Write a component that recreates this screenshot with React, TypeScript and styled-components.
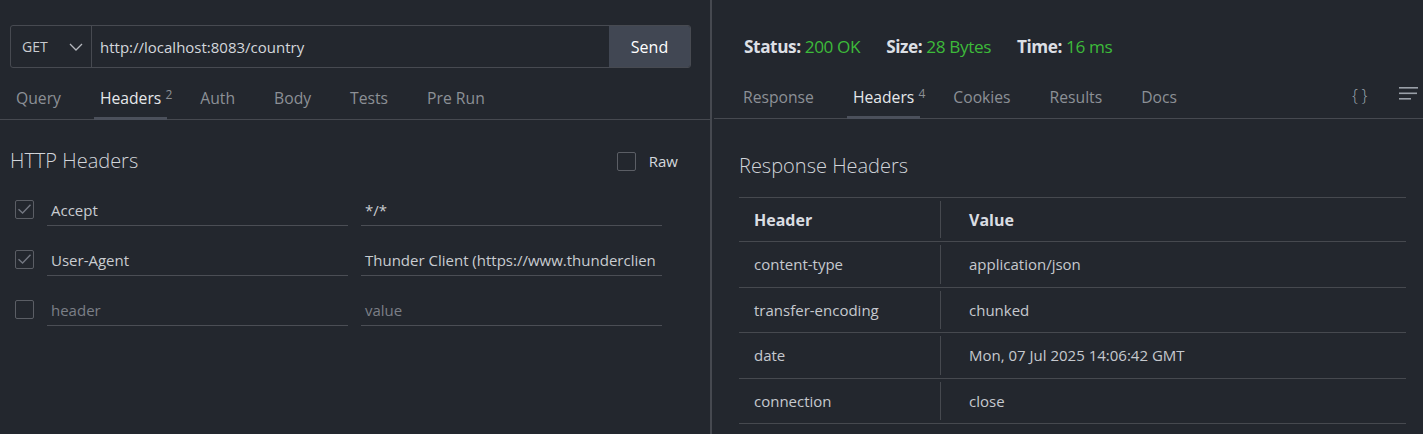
import React from "react";
import styled, { createGlobalStyle } from "styled-components";

const Global = createGlobalStyle`
  html, body { margin: 0; padding: 0; background: #23272e; }
  body { font-family: "Open Sans", "Noto Sans", sans-serif; color: #cccccc; }
  * { box-sizing: border-box; }
`;

const Page = styled.div`
  display: grid;
  grid-template-columns: 710px 2px 1fr;
  width: 1423px;
  height: 434px;
  background: #23272e;
  overflow: hidden;
`;

const Divider = styled.div`
  background: #464950;
`;

const LeftPanel = styled.section`
  display: flex;
  flex-direction: column;
  padding-top: 25px;
`;

const RightPanel = styled.section`
  display: flex;
  flex-direction: column;
  padding-left: 2px;
`;

const UrlBar = styled.div`
  display: flex;
  height: 43px;
  margin: 0 19px 0 10px;
  border: 1px solid #474a51;
  border-radius: 3px;
  overflow: hidden;
`;

const MethodSelect = styled.div`
  width: 81px;
  display: flex;
  align-items: center;
  justify-content: space-between;
  padding: 0 8px 0 11px;
  border-right: 1px solid #474a51;
  font-size: 14px;
  color: #c9ccd1;
`;

const UrlText = styled.div`
  flex: 1;
  display: flex;
  align-items: center;
  padding-left: 8px;
  font-size: 15px;
  color: #d4d7dc;
`;

const SendButton = styled.div`
  width: 81px;
  display: flex;
  align-items: center;
  justify-content: center;
  background: #414753;
  color: #ffffff;
  font-size: 16px;
`;

const TabBar = styled.nav<{ $pad: number }>`
  display: flex;
  align-items: flex-end;
  height: 52px;
  border-bottom: 1px solid #464950;
  padding-left: ${(p) => p.$pad}px;
  gap: 27px;
`;

const Tab = styled.div<{ $active?: boolean }>`
  position: relative;
  padding: 0 6px 8px;
  font-size: 15.7px;
  line-height: 22px;
  color: ${(p) => (p.$active ? "#e6e8eb" : "#8c9096")};
  border-bottom: 3px solid ${(p) => (p.$active ? "#4b505b" : "transparent")};
  margin-bottom: -1px;
`;

const Sup = styled.span`
  position: absolute;
  right: -5px;
  top: -3px;
  font-size: 12px;
  color: #8c9096;
`;

const TabTools = styled.div`
  margin-left: auto;
  display: flex;
  align-items: center;
  gap: 32px;
  padding: 0 5px 13px 0;
  color: #8c9096;
`;

const Braces = styled.span`
  font-size: 17px;
  font-weight: 300;
  letter-spacing: -0.5px;
  color: #9aa3ad;
  line-height: 20px;
  margin-top: 4px;
`;

const SectionHead = styled.div`
  display: flex;
  align-items: center;
  justify-content: space-between;
  padding: 28px 32px 0 10px;
`;

const Title = styled.h2`
  margin: 0;
  font-size: 20px;
  font-weight: 300;
  color: #d2d5da;
  line-height: 26px;
`;

const RawToggle = styled.label`
  display: flex;
  align-items: center;
  gap: 13px;
  font-size: 15px;
  color: #d4d7dc;
`;

const Box = styled.span<{ $checked?: boolean }>`
  width: 19px;
  height: 19px;
  border: 1px solid #5b5e65;
  border-radius: 2px;
  display: inline-flex;
  align-items: center;
  justify-content: center;
`;

const HeaderRows = styled.div`
  display: flex;
  flex-direction: column;
  gap: 20px;
  padding: 22px 0 0 15px;
`;

const HeaderRow = styled.div`
  display: grid;
  grid-template-columns: 19px 301px 301px;
  column-gap: 13px;
  align-items: end;
  & > :first-child { align-self: center; margin-top: -4px; }
`;

const Field = styled.div<{ $placeholder?: boolean }>`
  height: 30px;
  border-bottom: 1px solid #4b4e55;
  padding: 0 0 5px 4px;
  display: flex;
  align-items: flex-end;
  font-size: 15px;
  white-space: nowrap;
  overflow: hidden;
  color: ${(p) => (p.$placeholder ? "#7b7f87" : "#c9ccd1")};
`;

const StatusLine = styled.div`
  display: flex;
  gap: 26px;
  height: 67px;
  padding: 36px 0 0 30px;
  font-size: 17.2px;
  line-height: 22px;
  letter-spacing: -0.4px;
`;

const StatusItem = styled.span`
  font-weight: 700;
  color: #dcdfe4;
  & > b { font-weight: 400; color: #3dba3a; margin-left: 4px; }
`;

const RespTitle = styled(Title)`
  padding: 34px 0 0 25px;
`;

const Table = styled.div`
  margin: 18px 17px 0 25px;
  border-top: 1px solid #46494f;
`;

const TRow = styled.div<{ $head?: boolean }>`
  display: grid;
  grid-template-columns: 201px 1fr;
  height: ${(p) => (p.$head ? 44 : 45.5)}px;
  border-bottom: 1px solid #46494f;
  align-items: center;
  color: ${(p) => (p.$head ? "#dadde2" : "#c6c9ce")};
  font-weight: ${(p) => (p.$head ? 700 : 400)};
  font-size: ${(p) => (p.$head ? 16 : 15)}px;
`;

const Cell = styled.div`
  height: calc(100% - 6px);
  display: flex;
  align-items: center;
  padding-left: 15px;
  & + & {
    border-left: 1px solid #46494f;
    padding-left: 28px;
  }
`;

const Check = () => (
  <svg width="15" height="12" viewBox="0 0 15 12">
    <path d="M1.5 6.2 L5.6 10 L13.5 1.8" fill="none" stroke="#737781" strokeWidth="1.4" />
  </svg>
);

const Chevron = () => (
  <svg width="14" height="8" viewBox="0 0 14 8">
    <path d="M1 1 L7 7 L13 1" fill="none" stroke="#b5b8be" strokeWidth="1.3" />
  </svg>
);

const MenuIcon = () => (
  <svg width="19" height="13" viewBox="0 0 19 13">
    <rect x="0" y="0" width="19" height="1.6" fill="#9aa0a8" />
    <rect x="0" y="5.5" width="18" height="1.6" fill="#9aa0a8" />
    <rect x="0" y="11" width="12" height="1.6" fill="#9aa0a8" />
  </svg>
);

const reqHeaders = [
  { on: true, k: "Accept", v: "*/*" },
  { on: true, k: "User-Agent", v: "Thunder Client (https://www.thunderclien" },
  { on: false, k: "", v: "" },
];

const respHeaders = [
  ["content-type", "application/json"],
  ["transfer-encoding", "chunked"],
  ["date", "Mon, 07 Jul 2025 14:06:42 GMT"],
  ["connection", "close"],
];

export default function App() {
  return (
    <Page>
      <Global />
      <LeftPanel>
        <UrlBar>
          <MethodSelect>
            GET <Chevron />
          </MethodSelect>
          <UrlText>http://localhost:8083/country</UrlText>
          <SendButton>Send</SendButton>
        </UrlBar>
        <TabBar $pad={10}>
          <Tab>Query</Tab>
          <Tab $active>
            Headers<Sup>2</Sup>
          </Tab>
          <Tab>Auth</Tab>
          <Tab>Body</Tab>
          <Tab>Tests</Tab>
          <Tab>Pre Run</Tab>
        </TabBar>
        <SectionHead>
          <Title>HTTP Headers</Title>
          <RawToggle>
            <Box />
            Raw
          </RawToggle>
        </SectionHead>
        <HeaderRows>
          {reqHeaders.map((h, i) => (
            <HeaderRow key={i}>
              <Box $checked={h.on}>{h.on && <Check />}</Box>
              <Field $placeholder={!h.k}>{h.k || "header"}</Field>
              <Field $placeholder={!h.v}>{h.v || "value"}</Field>
            </HeaderRow>
          ))}
        </HeaderRows>
      </LeftPanel>
      <Divider />
      <RightPanel>
        <StatusLine>
          <StatusItem>
            Status:<b>200 OK</b>
          </StatusItem>
          <StatusItem>
            Size:<b>28 Bytes</b>
          </StatusItem>
          <StatusItem>
            Time:<b>16 ms</b>
          </StatusItem>
        </StatusLine>
        <TabBar $pad={23}>
          <Tab>Response</Tab>
          <Tab $active>
            Headers<Sup>4</Sup>
          </Tab>
          <Tab>Cookies</Tab>
          <Tab>Results</Tab>
          <Tab>Docs</Tab>
          <TabTools>
            <Braces>{"{ }"}</Braces>
            <MenuIcon />
          </TabTools>
        </TabBar>
        <RespTitle>Response Headers</RespTitle>
        <Table>
          <TRow $head>
            <Cell>Header</Cell>
            <Cell>Value</Cell>
          </TRow>
          {respHeaders.map(([k, v]) => (
            <TRow key={k}>
              <Cell>{k}</Cell>
              <Cell>{v}</Cell>
            </TRow>
          ))}
        </Table>
      </RightPanel>
    </Page>
  );
}
